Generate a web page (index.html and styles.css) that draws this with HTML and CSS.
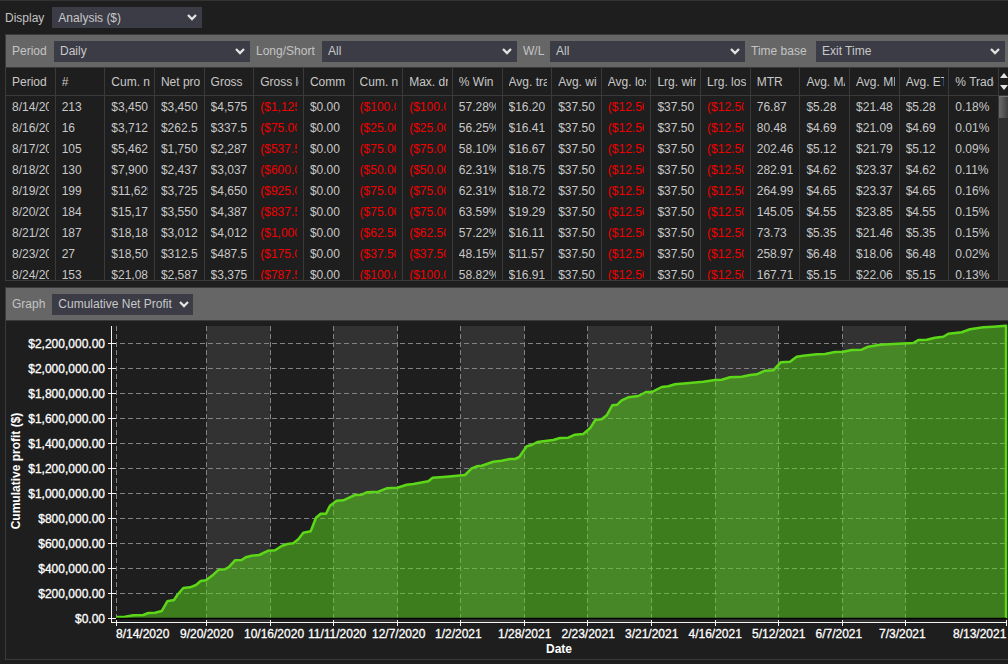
FILE: index.html
```html
<!DOCTYPE html>
<html lang="en">
<head>
<meta charset="utf-8">
<title>Analysis</title>
<link rel="stylesheet" href="styles.css">
</head>
<body>
<div class="display-row">
  <span class="label">Display</span>
  <div class="select select-display"><span>Analysis ($)</span><svg class="chev" viewBox="0 0 10 7"><polyline points="1,1 5,5 9,1"/></svg></div>
</div>

<section class="panel panel-table">
  <div class="filter-bar">
    <span class="label">Period</span>
    <div class="select"><span>Daily</span><svg class="chev" viewBox="0 0 10 7"><polyline points="1,1 5,5 9,1"/></svg></div>
    <span class="label label-pad">Long/Short</span>
    <div class="select"><span>All</span><svg class="chev" viewBox="0 0 10 7"><polyline points="1,1 5,5 9,1"/></svg></div>
    <span class="label label-pad">W/L</span>
    <div class="select"><span>All</span><svg class="chev" viewBox="0 0 10 7"><polyline points="1,1 5,5 9,1"/></svg></div>
    <span class="label label-pad">Time base</span>
    <div class="select"><span>Exit Time</span><svg class="chev" viewBox="0 0 10 7"><polyline points="1,1 5,5 9,1"/></svg></div>
  </div>
  <div class="table-head">
    <div class="row head-row">
      <div class="c"><span>Period</span></div><div class="c"><span>#</span></div><div class="c"><span>Cum. net profit</span></div><div class="c"><span>Net profit</span></div><div class="c"><span>Gross</span></div><div class="c"><span>Gross loss</span></div><div class="c"><span>Comm</span></div><div class="c"><span>Cum. net drawdown</span></div><div class="c"><span>Max. drawdown</span></div><div class="c"><span>% Win</span></div><div class="c"><span>Avg. trade</span></div><div class="c"><span>Avg. winner</span></div><div class="c"><span>Avg. loser</span></div><div class="c"><span>Lrg. winner</span></div><div class="c"><span>Lrg. loser</span></div><div class="c"><span>MTR</span></div><div class="c"><span>Avg. MAE</span></div><div class="c"><span>Avg. MFE</span></div><div class="c"><span>Avg. ETD</span></div><div class="c"><span>% Trade time</span></div>
    </div>
    <div class="scroll-arrows">
      <svg viewBox="0 0 8 17"><polygon points="4,0 8,5 0,5"/><polygon points="0,12 8,12 4,17"/></svg>
    </div>
  </div>
  <div class="table-body">
    <div class="rows">
      <div class="row"><div class="c"><span>8/14/2020</span></div><div class="c"><span>213</span></div><div class="c"><span>$3,450.00</span></div><div class="c"><span>$3,450.00</span></div><div class="c"><span>$4,575.00</span></div><div class="c neg"><span>($1,125.00)</span></div><div class="c"><span>$0.00</span></div><div class="c neg"><span>($100.00)</span></div><div class="c neg"><span>($100.00)</span></div><div class="c"><span>57.28%</span></div><div class="c"><span>$16.20</span></div><div class="c"><span>$37.50</span></div><div class="c neg"><span>($12.50)</span></div><div class="c"><span>$37.50</span></div><div class="c neg"><span>($12.50)</span></div><div class="c"><span>76.87</span></div><div class="c"><span>$5.28</span></div><div class="c"><span>$21.48</span></div><div class="c"><span>$5.28</span></div><div class="c"><span>0.18%</span></div></div>
      <div class="row"><div class="c"><span>8/16/2020</span></div><div class="c"><span>16</span></div><div class="c"><span>$3,712.50</span></div><div class="c"><span>$262.50</span></div><div class="c"><span>$337.50</span></div><div class="c neg"><span>($75.00)</span></div><div class="c"><span>$0.00</span></div><div class="c neg"><span>($25.00)</span></div><div class="c neg"><span>($25.00)</span></div><div class="c"><span>56.25%</span></div><div class="c"><span>$16.41</span></div><div class="c"><span>$37.50</span></div><div class="c neg"><span>($12.50)</span></div><div class="c"><span>$37.50</span></div><div class="c neg"><span>($12.50)</span></div><div class="c"><span>80.48</span></div><div class="c"><span>$4.69</span></div><div class="c"><span>$21.09</span></div><div class="c"><span>$4.69</span></div><div class="c"><span>0.01%</span></div></div>
      <div class="row"><div class="c"><span>8/17/2020</span></div><div class="c"><span>105</span></div><div class="c"><span>$5,462.50</span></div><div class="c"><span>$1,750.00</span></div><div class="c"><span>$2,287.50</span></div><div class="c neg"><span>($537.50)</span></div><div class="c"><span>$0.00</span></div><div class="c neg"><span>($75.00)</span></div><div class="c neg"><span>($75.00)</span></div><div class="c"><span>58.10%</span></div><div class="c"><span>$16.67</span></div><div class="c"><span>$37.50</span></div><div class="c neg"><span>($12.50)</span></div><div class="c"><span>$37.50</span></div><div class="c neg"><span>($12.50)</span></div><div class="c"><span>202.46</span></div><div class="c"><span>$5.12</span></div><div class="c"><span>$21.79</span></div><div class="c"><span>$5.12</span></div><div class="c"><span>0.09%</span></div></div>
      <div class="row"><div class="c"><span>8/18/2020</span></div><div class="c"><span>130</span></div><div class="c"><span>$7,900.00</span></div><div class="c"><span>$2,437.50</span></div><div class="c"><span>$3,037.50</span></div><div class="c neg"><span>($600.00)</span></div><div class="c"><span>$0.00</span></div><div class="c neg"><span>($50.00)</span></div><div class="c neg"><span>($50.00)</span></div><div class="c"><span>62.31%</span></div><div class="c"><span>$18.75</span></div><div class="c"><span>$37.50</span></div><div class="c neg"><span>($12.50)</span></div><div class="c"><span>$37.50</span></div><div class="c neg"><span>($12.50)</span></div><div class="c"><span>282.91</span></div><div class="c"><span>$4.62</span></div><div class="c"><span>$23.37</span></div><div class="c"><span>$4.62</span></div><div class="c"><span>0.11%</span></div></div>
      <div class="row"><div class="c"><span>8/19/2020</span></div><div class="c"><span>199</span></div><div class="c"><span>$11,625.00</span></div><div class="c"><span>$3,725.00</span></div><div class="c"><span>$4,650.00</span></div><div class="c neg"><span>($925.00)</span></div><div class="c"><span>$0.00</span></div><div class="c neg"><span>($75.00)</span></div><div class="c neg"><span>($75.00)</span></div><div class="c"><span>62.31%</span></div><div class="c"><span>$18.72</span></div><div class="c"><span>$37.50</span></div><div class="c neg"><span>($12.50)</span></div><div class="c"><span>$37.50</span></div><div class="c neg"><span>($12.50)</span></div><div class="c"><span>264.99</span></div><div class="c"><span>$4.65</span></div><div class="c"><span>$23.37</span></div><div class="c"><span>$4.65</span></div><div class="c"><span>0.16%</span></div></div>
      <div class="row"><div class="c"><span>8/20/2020</span></div><div class="c"><span>184</span></div><div class="c"><span>$15,175.00</span></div><div class="c"><span>$3,550.00</span></div><div class="c"><span>$4,387.50</span></div><div class="c neg"><span>($837.50)</span></div><div class="c"><span>$0.00</span></div><div class="c neg"><span>($75.00)</span></div><div class="c neg"><span>($75.00)</span></div><div class="c"><span>63.59%</span></div><div class="c"><span>$19.29</span></div><div class="c"><span>$37.50</span></div><div class="c neg"><span>($12.50)</span></div><div class="c"><span>$37.50</span></div><div class="c neg"><span>($12.50)</span></div><div class="c"><span>145.05</span></div><div class="c"><span>$4.55</span></div><div class="c"><span>$23.85</span></div><div class="c"><span>$4.55</span></div><div class="c"><span>0.15%</span></div></div>
      <div class="row"><div class="c"><span>8/21/2020</span></div><div class="c"><span>187</span></div><div class="c"><span>$18,187.50</span></div><div class="c"><span>$3,012.50</span></div><div class="c"><span>$4,012.50</span></div><div class="c neg"><span>($1,000.00)</span></div><div class="c"><span>$0.00</span></div><div class="c neg"><span>($62.50)</span></div><div class="c neg"><span>($62.50)</span></div><div class="c"><span>57.22%</span></div><div class="c"><span>$16.11</span></div><div class="c"><span>$37.50</span></div><div class="c neg"><span>($12.50)</span></div><div class="c"><span>$37.50</span></div><div class="c neg"><span>($12.50)</span></div><div class="c"><span>73.73</span></div><div class="c"><span>$5.35</span></div><div class="c"><span>$21.46</span></div><div class="c"><span>$5.35</span></div><div class="c"><span>0.15%</span></div></div>
      <div class="row"><div class="c"><span>8/23/2020</span></div><div class="c"><span>27</span></div><div class="c"><span>$18,500.00</span></div><div class="c"><span>$312.50</span></div><div class="c"><span>$487.50</span></div><div class="c neg"><span>($175.00)</span></div><div class="c"><span>$0.00</span></div><div class="c neg"><span>($37.50)</span></div><div class="c neg"><span>($37.50)</span></div><div class="c"><span>48.15%</span></div><div class="c"><span>$11.57</span></div><div class="c"><span>$37.50</span></div><div class="c neg"><span>($12.50)</span></div><div class="c"><span>$37.50</span></div><div class="c neg"><span>($12.50)</span></div><div class="c"><span>258.97</span></div><div class="c"><span>$6.48</span></div><div class="c"><span>$18.06</span></div><div class="c"><span>$6.48</span></div><div class="c"><span>0.02%</span></div></div>
      <div class="row"><div class="c"><span>8/24/2020</span></div><div class="c"><span>153</span></div><div class="c"><span>$21,087.50</span></div><div class="c"><span>$2,587.50</span></div><div class="c"><span>$3,375.00</span></div><div class="c neg"><span>($787.50)</span></div><div class="c"><span>$0.00</span></div><div class="c neg"><span>($100.00)</span></div><div class="c neg"><span>($100.00)</span></div><div class="c"><span>58.82%</span></div><div class="c"><span>$16.91</span></div><div class="c"><span>$37.50</span></div><div class="c neg"><span>($12.50)</span></div><div class="c"><span>$37.50</span></div><div class="c neg"><span>($12.50)</span></div><div class="c"><span>167.71</span></div><div class="c"><span>$5.15</span></div><div class="c"><span>$22.06</span></div><div class="c"><span>$5.15</span></div><div class="c"><span>0.13%</span></div></div>
    </div>
    <div class="scroll-track"><div class="scroll-thumb"></div></div>
  </div>
</section>

<section class="panel panel-graph">
  <div class="graph-bar">
    <span class="label label-graph">Graph</span>
    <div class="select select-graph"><span>Cumulative Net Profit</span><svg class="chev" viewBox="0 0 10 7"><polyline points="1,1 5,5 9,1"/></svg></div>
  </div>
  <svg class="chart" viewBox="6 321 1002 338" width="1002" height="338">
    <g class="bands">
      <rect x="206.5" y="326" width="64" height="296"/>
      <rect x="333.5" y="326" width="64" height="296"/>
      <rect x="460.5" y="326" width="64" height="296"/>
      <rect x="587.5" y="326" width="64" height="296"/>
      <rect x="715.5" y="326" width="63" height="296"/>
      <rect x="842.5" y="326" width="63" height="296"/>
    </g>
    <g class="grid">
      <line x1="112" x2="1006" y1="343.5" y2="343.5"/>
      <line x1="112" x2="1006" y1="368.5" y2="368.5"/>
      <line x1="112" x2="1006" y1="393.5" y2="393.5"/>
      <line x1="112" x2="1006" y1="418.5" y2="418.5"/>
      <line x1="112" x2="1006" y1="443.5" y2="443.5"/>
      <line x1="112" x2="1006" y1="468.5" y2="468.5"/>
      <line x1="112" x2="1006" y1="493.5" y2="493.5"/>
      <line x1="112" x2="1006" y1="518.5" y2="518.5"/>
      <line x1="112" x2="1006" y1="543.5" y2="543.5"/>
      <line x1="112" x2="1006" y1="568.5" y2="568.5"/>
      <line x1="112" x2="1006" y1="593.5" y2="593.5"/>
      <line x1="116.5" x2="116.5" y1="326" y2="618"/>
      <line x1="206.5" x2="206.5" y1="326" y2="618"/>
      <line x1="270.5" x2="270.5" y1="326" y2="618"/>
      <line x1="333.5" x2="333.5" y1="326" y2="618"/>
      <line x1="397.5" x2="397.5" y1="326" y2="618"/>
      <line x1="460.5" x2="460.5" y1="326" y2="618"/>
      <line x1="524.5" x2="524.5" y1="326" y2="618"/>
      <line x1="587.5" x2="587.5" y1="326" y2="618"/>
      <line x1="651.5" x2="651.5" y1="326" y2="618"/>
      <line x1="715.5" x2="715.5" y1="326" y2="618"/>
      <line x1="778.5" x2="778.5" y1="326" y2="618"/>
      <line x1="842.5" x2="842.5" y1="326" y2="618"/>
      <line x1="905.5" x2="905.5" y1="326" y2="618"/>
    </g>
    <polygon class="area" points="116,618 116,617 125,616.7 133.3,615.3 143.3,615 148.3,613 155,612.7 161.7,611 167.3,601.3 174,600 177.3,595 183.3,588 190,587.3 196,585 200.7,581 206,580.3 213.3,574.7 218.7,569.7 225,569.3 229.3,566.7 235,560.3 241.7,560 245.7,557.3 251.7,555.7 259.3,555 268.3,550.7 275,550.3 281.7,546 287.3,544 293.3,543.3 298.3,539.3 303.3,532.7 310.7,531.3 316,517.7 320.7,513.7 326,513.7 330,505.7 336.7,500.7 343.3,500.3 355,495 361.7,494.7 366.7,492.3 378.3,491.7 386.7,488.3 397.3,487.7 406.7,484.7 413.3,484 428.3,481.3 432.7,477.7 446.7,476.7 465,475 471.7,468.3 476.7,466.3 481.7,465.7 493.3,461.7 501.7,460.7 510,459 515,459 519.3,457 526.7,446.3 531.7,445 537.3,442 553.3,440 560,438 568.3,437.7 575,434.7 583.3,434 590,428.3 595.3,420 601.7,419.3 606.7,415.3 612.3,405.3 617.3,404.7 621.7,400.3 628.3,397.3 638.3,396 646,392 652.7,391.7 661.7,387 668.3,386.3 675,384.3 686.7,383.3 703.3,381.7 715,380 721.7,379.7 730,377.3 741.7,376.7 750,375 756.7,374.3 765,370.7 773.3,370.3 780.7,362.3 790,361.7 796.7,356.7 803.3,355.7 816.7,354.3 825,354 835,352 843.3,351.7 851.7,350 861.7,349.7 868.3,346.7 880,344.7 893.3,344 913.3,343 918.3,340 926.7,339.7 935,337.7 943.3,336.7 948.3,333.7 961.7,332.3 970,329.3 983.3,327.3 993.3,326.7 1006,325.7 1006,618"/>
    <polyline class="curve" points="116,617 125,616.7 133.3,615.3 143.3,615 148.3,613 155,612.7 161.7,611 167.3,601.3 174,600 177.3,595 183.3,588 190,587.3 196,585 200.7,581 206,580.3 213.3,574.7 218.7,569.7 225,569.3 229.3,566.7 235,560.3 241.7,560 245.7,557.3 251.7,555.7 259.3,555 268.3,550.7 275,550.3 281.7,546 287.3,544 293.3,543.3 298.3,539.3 303.3,532.7 310.7,531.3 316,517.7 320.7,513.7 326,513.7 330,505.7 336.7,500.7 343.3,500.3 355,495 361.7,494.7 366.7,492.3 378.3,491.7 386.7,488.3 397.3,487.7 406.7,484.7 413.3,484 428.3,481.3 432.7,477.7 446.7,476.7 465,475 471.7,468.3 476.7,466.3 481.7,465.7 493.3,461.7 501.7,460.7 510,459 515,459 519.3,457 526.7,446.3 531.7,445 537.3,442 553.3,440 560,438 568.3,437.7 575,434.7 583.3,434 590,428.3 595.3,420 601.7,419.3 606.7,415.3 612.3,405.3 617.3,404.7 621.7,400.3 628.3,397.3 638.3,396 646,392 652.7,391.7 661.7,387 668.3,386.3 675,384.3 686.7,383.3 703.3,381.7 715,380 721.7,379.7 730,377.3 741.7,376.7 750,375 756.7,374.3 765,370.7 773.3,370.3 780.7,362.3 790,361.7 796.7,356.7 803.3,355.7 816.7,354.3 825,354 835,352 843.3,351.7 851.7,350 861.7,349.7 868.3,346.7 880,344.7 893.3,344 913.3,343 918.3,340 926.7,339.7 935,337.7 943.3,336.7 948.3,333.7 961.7,332.3 970,329.3 983.3,327.3 993.3,326.7 1006,325.7 1006,618"/>
    <line class="base" x1="116" x2="1006" y1="618.5" y2="618.5"/>
    <g class="axis">
      <line x1="111.5" x2="111.5" y1="326" y2="623"/>
      <line x1="111" x2="1007" y1="622.5" y2="622.5"/>
      <line x1="108" x2="116" y1="343.5" y2="343.5"/>
      <line x1="108" x2="116" y1="368.5" y2="368.5"/>
      <line x1="108" x2="116" y1="393.5" y2="393.5"/>
      <line x1="108" x2="116" y1="418.5" y2="418.5"/>
      <line x1="108" x2="116" y1="443.5" y2="443.5"/>
      <line x1="108" x2="116" y1="468.5" y2="468.5"/>
      <line x1="108" x2="116" y1="493.5" y2="493.5"/>
      <line x1="108" x2="116" y1="518.5" y2="518.5"/>
      <line x1="108" x2="116" y1="543.5" y2="543.5"/>
      <line x1="108" x2="116" y1="568.5" y2="568.5"/>
      <line x1="108" x2="116" y1="593.5" y2="593.5"/>
      <line x1="108" x2="116" y1="618.5" y2="618.5"/>
      <line x1="116.5" x2="116.5" y1="620" y2="626"/>
      <line x1="206.5" x2="206.5" y1="620" y2="626"/>
      <line x1="270.5" x2="270.5" y1="620" y2="626"/>
      <line x1="333.5" x2="333.5" y1="620" y2="626"/>
      <line x1="397.5" x2="397.5" y1="620" y2="626"/>
      <line x1="460.5" x2="460.5" y1="620" y2="626"/>
      <line x1="524.5" x2="524.5" y1="620" y2="626"/>
      <line x1="587.5" x2="587.5" y1="620" y2="626"/>
      <line x1="651.5" x2="651.5" y1="620" y2="626"/>
      <line x1="715.5" x2="715.5" y1="620" y2="626"/>
      <line x1="778.5" x2="778.5" y1="620" y2="626"/>
      <line x1="842.5" x2="842.5" y1="620" y2="626"/>
      <line x1="905.5" x2="905.5" y1="620" y2="626"/>
      <line x1="1006.5" x2="1006.5" y1="620" y2="626"/>
    </g>
    <g class="ylabels">
      <text x="105" y="347.5">$2,200,000.00</text>
      <text x="105" y="372.5">$2,000,000.00</text>
      <text x="105" y="397.5">$1,800,000.00</text>
      <text x="105" y="422.5">$1,600,000.00</text>
      <text x="105" y="447.5">$1,400,000.00</text>
      <text x="105" y="472.5">$1,200,000.00</text>
      <text x="105" y="497.5">$1,000,000.00</text>
      <text x="105" y="522.5">$800,000.00</text>
      <text x="105" y="547.5">$600,000.00</text>
      <text x="105" y="572.5">$400,000.00</text>
      <text x="105" y="597.5">$200,000.00</text>
      <text x="105" y="622.5">$0.00</text>
    </g>
    <g class="xlabels">
      <text x="116" y="638">8/14/2020</text>
      <text x="180" y="638">9/20/2020</text>
      <text x="244" y="638">10/16/2020</text>
      <text x="308" y="638">11/11/2020</text>
      <text x="372" y="638">12/7/2020</text>
      <text x="435" y="638">1/2/2021</text>
      <text x="498" y="638">1/28/2021</text>
      <text x="561.5" y="638">2/23/2021</text>
      <text x="625" y="638">3/21/2021</text>
      <text x="688.5" y="638">4/16/2021</text>
      <text x="752" y="638">5/12/2021</text>
      <text x="815.5" y="638">6/7/2021</text>
      <text x="879" y="638">7/3/2021</text>
      <text x="953" y="638">8/13/2021</text>
    </g>
    <text class="axis-title" x="559" y="653">Date</text>
    <text class="axis-title axis-title-y" transform="translate(20 471) rotate(-90)">Cumulative profit ($)</text>
  </svg>
</section>
</body>
</html>
```
FILE: styles.css
```css
* { box-sizing: border-box; }

html, body { height: 100%; }

body {
  margin: 0;
  overflow: hidden;
  background: #1e1e1e;
  border-top: 1px solid #333;
  color: #c8c8c8;
  font: 12px/14px "Liberation Sans", Arial, sans-serif;
}

.label { color: #c4c4c4; white-space: nowrap; }

.display-row {
  display: flex;
  align-items: center;
  gap: 8px;
  height: 21px;
  margin: 6px 0 6px 5px;
}

.select {
  display: flex;
  align-items: center;
  justify-content: space-between;
  height: 21px;
  padding: 0 5px 0 6px;
  background: #3c3c46;
  color: #c8c8c8;
  white-space: nowrap;
}

.select-display { width: 150px; }
.select-graph { width: 141px; padding-right: 4px; }

.chev { width: 10px; height: 7px; flex: none; }
.chev polyline { fill: none; stroke: #e2e2e2; stroke-width: 2.3; }

.panel {
  margin-left: 5px;
  border: 1px solid #3a3a3a;
  border-right: 0;
}

.filter-bar {
  display: grid;
  grid-template-columns: 42px 196px 72px 195px 33px 195px 71px 189px;
  align-items: center;
  height: 33px;
  padding: 0 3px 0 6px;
  background: #666;
  border-bottom: 1px solid #3a3a3a;
}

.label-pad { padding-left: 6px; }

.table-head {
  display: flex;
  height: 28px;
  border-bottom: 1px solid #3a3a3a;
}

.table-body {
  display: flex;
  height: 184px;
  overflow: hidden;
}

.rows { width: 993px; flex: none; }

.row {
  display: grid;
  grid-template-columns: repeat(20, 1fr);
  height: 21px;
}

.head-row { width: 993px; flex: none; height: 27px; }

.c {
  display: flex;
  align-items: center;
  padding: 0 6px;
  border-right: 1px solid #3a3a3a;
  min-width: 0;
}

.head-row .c { padding-right: 4px; }

.c span {
  display: block;
  width: 100%;
  overflow: hidden;
  white-space: nowrap;
}

.neg { color: #f00000; }

.scroll-arrows {
  flex: 1;
  display: flex;
  justify-content: flex-end;
  padding: 5px 0 0 1px;
}

.scroll-arrows svg { width: 8px; height: 17px; }
.scroll-arrows polygon { fill: #e4e4e4; }

.scroll-track {
  flex: 1;
  background: #2e2e2e;
}

.scroll-thumb {
  height: 22px;
  background: linear-gradient(90deg, #6a6a6a, #3e3e3e);
  border-top: 1px solid #777;
}

.panel-table { height: 247px; }

.panel-graph {
  margin-top: 6px;
  height: 373px;
}

.graph-bar {
  display: flex;
  align-items: center;
  gap: 7px;
  height: 33px;
  padding-left: 6px;
  background: #666;
  border-bottom: 1px solid #3a3a3a;
}

.chart { display: block; }

.bands rect { fill: #323232; }

.grid line {
  stroke: #828282;
  stroke-width: 1;
  stroke-dasharray: 5 3;
}

.area { fill: rgba(94, 220, 30, 0.5); }

.curve {
  fill: none;
  stroke: #5cd818;
  stroke-width: 2.5;
  stroke-linejoin: round;
}

.base { stroke: #000; stroke-width: 1.5; }

.axis line { stroke: #f4f4f4; stroke-width: 1; }

.ylabels text, .xlabels text {
  fill: #fff;
  stroke: #fff;
  stroke-width: 0.3px;
  font-size: 12px;
}

.ylabels text { text-anchor: end; }

.axis-title {
  fill: #fff;
  font-size: 12px;
  font-weight: 700;
  text-anchor: middle;
}
```
